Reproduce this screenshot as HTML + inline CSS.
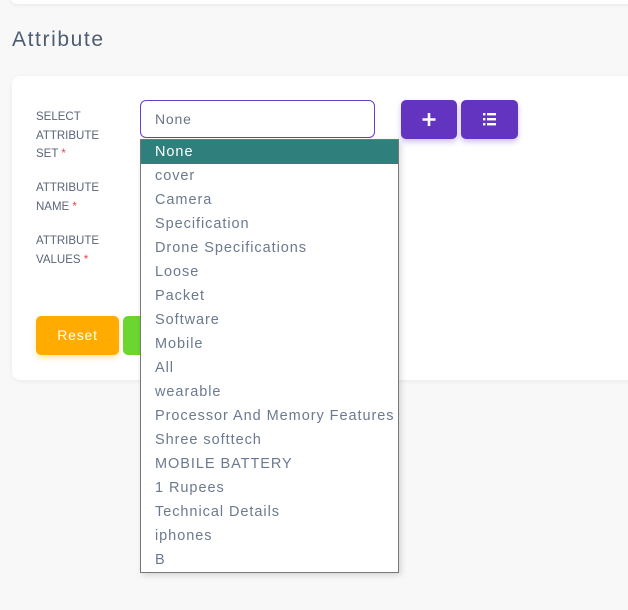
<!DOCTYPE html>
<html><head><style>
*{margin:0;padding:0;box-sizing:border-box}
body{width:628px;height:610px;background:#f8f8f9;font-family:"Liberation Sans",sans-serif;position:relative;overflow:hidden}
.topcard{position:absolute;left:10px;top:-10px;width:640px;height:14px;background:#fff;border-radius:8px;box-shadow:0 1px 4px rgba(0,0,0,.08)}
h1{position:absolute;left:12px;top:28px;font-size:21px;font-weight:normal;color:#4e5d72;letter-spacing:1.6px}
.card{position:absolute;left:12px;top:76px;width:640px;height:304px;background:#fff;border-radius:8px;box-shadow:0 1px 4px rgba(0,0,0,.06)}
.lbl{position:absolute;left:36px;font-size:11.5px;line-height:18.5px;color:#5b6577;text-transform:uppercase}
.lbl b{color:#e44;font-weight:normal}
.sel{position:absolute;left:140px;top:100px;width:235px;height:38px;border:1px solid #6a3fc8;border-radius:6px;font-size:14px;color:#6b7486;padding:10px 0 0 14px;letter-spacing:0.8px}
.btn{position:absolute;top:100px;height:39px;background:#6234c0;border-radius:5px;box-shadow:0 3px 6px rgba(98,52,192,.3)}
.reset{position:absolute;left:36px;top:316px;width:83px;height:39px;background:#ffab00;border-radius:5px;color:#fff;font-size:14px;letter-spacing:0.8px;text-align:center;line-height:39px;box-shadow:0 3px 6px rgba(255,171,0,.3)}
.green{position:absolute;left:123px;top:316px;width:40px;height:39px;background:#6bd630;border-radius:5px}
.dd{position:absolute;left:140px;top:139px;width:259px;height:434px;background:#fff;border:1px solid #777;box-shadow:2px 2px 6px rgba(0,0,0,.15)}
.dd div{height:24px;line-height:25px;padding-left:14px;font-size:14.5px;letter-spacing:0.95px;color:#6b7a90;white-space:nowrap;overflow:hidden}
.dd div.on{background:#2f7f7c;color:#fff}
</style></head><body>
<div class="topcard"></div>
<h1>Attribute</h1>
<div class="card"></div>
<div class="lbl" style="top:108px">Select<br>Attribute<br>Set <b>*</b></div>
<div class="lbl" style="top:179px">Attribute<br>Name <b>*</b></div>
<div class="lbl" style="top:232px">Attribute<br>Values <b>*</b></div>
<div class="sel">None</div>
<div class="btn" style="left:401px;width:56px"><svg width="56" height="39"><path d="M28 13v13M21.5 19.5h13" stroke="#fff" stroke-width="2.6"/></svg></div>
<div class="btn" style="left:461px;width:57px"><svg width="57" height="39"><g fill="#fff"><rect x="22" y="13" width="2.4" height="2.4"/><rect x="22" y="18" width="2.4" height="2.4"/><rect x="22" y="23" width="2.4" height="2.4"/><rect x="26" y="13" width="9" height="2.4"/><rect x="26" y="18" width="9" height="2.4"/><rect x="26" y="23" width="9" height="2.4"/></g></svg></div>
<div class="reset">Reset</div>
<div class="green"></div>
<div class="dd">
<div class="on">None</div><div>cover</div><div>Camera</div><div>Specification</div><div>Drone Specifications</div><div>Loose</div><div>Packet</div><div>Software</div><div>Mobile</div><div>All</div><div>wearable</div><div>Processor And Memory Features</div><div>Shree softtech</div><div>MOBILE BATTERY</div><div>1 Rupees</div><div>Technical Details</div><div>iphones</div><div>B</div>
</div>
</body></html>
